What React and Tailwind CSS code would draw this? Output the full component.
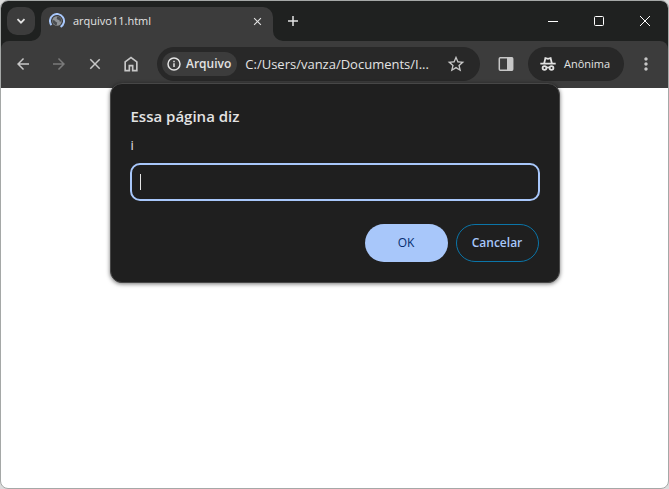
import React from "react";
import { MdArrowBack, MdArrowForward, MdClose, MdStarBorder, MdMoreVert } from "react-icons/md";

function LoadingFavicon() {
  return (
    <svg className="h-4 w-4 shrink-0" viewBox="0 0 16 16" fill="none" aria-hidden="true">
      <path d="M2.4 12.2A7 7 0 1 1 11.6 14" stroke="#a8c7fa" strokeWidth="2" />
      <circle cx="8" cy="8" r="4.8" fill="#8f9397" />
      <path d="M3.6 7 5.6 7.4 7 9 8.2 9.6 7.6 12.4A4.6 4.6 0 0 1 3.6 7ZM8.4 3.6 7.6 5.4 8.8 6.8 10.4 7 10.6 8.4 12.4 8.4A4.6 4.6 0 0 0 8.4 3.6Z" fill="#4a4d51" />
    </svg>
  );
}

function HomeIcon() {
  return (
    <svg className="h-5 w-5" viewBox="0 -960 960 960" fill="currentColor" aria-hidden="true">
      <path d="M240-200h120v-240h240v240h120v-360L480-740 240-560v360Zm-80 80v-480l320-240 320 240v480H520v-240h-80v240H160Z" />
    </svg>
  );
}

function InfoIcon() {
  return (
    <svg className="h-4 w-4" viewBox="0 0 16 16" fill="none" stroke="currentColor" aria-hidden="true">
      <circle cx="8" cy="8" r="6" strokeWidth="1.5" />
      <path d="M8 7.2V11M8 4.7V6.2" strokeWidth="1.5" />
    </svg>
  );
}

function SidePanelIcon() {
  return (
    <svg className="h-4 w-4" viewBox="0 0 16 16" fill="none" aria-hidden="true">
      <rect x="1.3" y="1.7" width="13.4" height="12.6" rx="1" stroke="currentColor" strokeWidth="1.5" />
      <path d="M9 1.5H14.5V14.5H9Z" fill="currentColor" />
    </svg>
  );
}

function IncognitoIcon() {
  return (
    <svg className="h-4 w-4" viewBox="0 0 16 16" fill="none" stroke="currentColor" strokeWidth="1.8" aria-hidden="true">
      <path d="M.3 7.6H15.7" />
      <path d="M4.2 7.2 5.4 2.1 8 2.8 10.6 2.1 11.8 7.2" />
      <circle cx="4.5" cy="12" r="1.9" />
      <circle cx="11.5" cy="12" r="1.9" />
      <path d="M6.3 11.8Q8 11 9.7 11.8" />
    </svg>
  );
}

function WindowButton({ label, children }) {
  return (
    <button type="button" aria-label={label} className="flex h-10 w-[46px] items-center justify-center text-white">
      <svg className="h-3 w-3" viewBox="0 0 12 12" fill="none" stroke="currentColor" aria-hidden="true">
        {children}
      </svg>
    </button>
  );
}

function TabStrip() {
  return (
    <div className="flex h-10 bg-[#1f2120]">
      <button type="button" aria-label="Pesquisar guias" className="mt-[6px] ml-[6px] flex h-7 w-7 items-center justify-center rounded-[10px] bg-[#3c3c3c] text-[#e3e3e3]">
        <svg className="h-3 w-3" viewBox="0 0 12 12" fill="none" stroke="currentColor" strokeWidth="1.8" aria-hidden="true">
          <path d="M2.5 4.2 6 7.7 9.5 4.2" />
        </svg>
      </button>
      <div className="flex flex-1 items-end">
        <svg className="-ml-1 h-[10px] w-[10px] shrink-0" viewBox="0 0 10 10" aria-hidden="true">
          <path d="M10 0A10 10 0 0 1 0 10H10Z" fill="#3c3c3c" />
        </svg>
        <div className="flex h-[34px] w-[232px] items-center rounded-t-[10px] bg-[#3c3c3c] pr-2 pb-[6px] pl-2">
          <LoadingFavicon />
          <span className="ml-2 flex-1 text-[11px] leading-4 text-[#e3e3e3]">arquivo11.html</span>
          <button type="button" aria-label="Fechar guia" className="flex h-4 w-4 items-center justify-center text-[#e3e3e3]">
            <MdClose size={13} />
          </button>
        </div>
        <svg className="h-[10px] w-[10px] shrink-0" viewBox="0 0 10 10" aria-hidden="true">
          <path d="M0 0A10 10 0 0 0 10 10H0Z" fill="#3c3c3c" />
        </svg>
        <button type="button" aria-label="Nova guia" className="mb-[6px] flex h-7 w-5 items-center justify-center text-[#e3e3e3]">
          <svg className="h-[10px] w-[10px]" viewBox="0 0 10 10" stroke="currentColor" strokeWidth="1.5" aria-hidden="true">
            <path d="M5 0V10M0 5H10" />
          </svg>
        </button>
      </div>
      <WindowButton label="Minimizar"><path d="M1 6.5H11" /></WindowButton>
      <WindowButton label="Maximizar"><rect x="1.5" y="1.5" width="9" height="9" rx="1" /></WindowButton>
      <WindowButton label="Fechar"><path d="M1 1 11 11M11 1 1 11" /></WindowButton>
    </div>
  );
}

function ToolButton({ label, dim, children }) {
  return (
    <button type="button" aria-label={label} className={`flex h-[34px] w-9 shrink-0 items-center justify-center ${dim ? "text-[#7a7a7a]" : "text-[#c7c7c7]"}`}>
      {children}
    </button>
  );
}

function Toolbar() {
  return (
    <div className="bg-[#1f2120]">
      <div className="flex h-[47px] items-start rounded-t-lg bg-[#3c3c3c] pt-[6px] pr-1 pl-1">
        <ToolButton label="Voltar"><MdArrowBack size={18} /></ToolButton>
        <ToolButton label="Avançar" dim><MdArrowForward size={18} /></ToolButton>
        <ToolButton label="Parar"><MdClose size={18} /></ToolButton>
        <ToolButton label="Início"><HomeIcon /></ToolButton>
        <div className="ml-2 flex h-[34px] min-w-0 flex-1 items-center rounded-full bg-[#282828] pl-[5px]">
          <button type="button" className="flex h-6 items-center rounded-full bg-[#3c3c3c] pr-1.5 pl-1 text-[12px] font-semibold text-[#e3e3e3]">
            <InfoIcon />
            <span className="ml-1 leading-4">Arquivo</span>
          </button>
          <input
            aria-label="Barra de endereço"
            readOnly
            defaultValue="C:/Users/vanza/Documents/I..."
            className="ml-2 h-6 min-w-0 flex-1 bg-transparent text-[13px] text-[#e3e3e3] outline-none"
          />
          <button type="button" aria-label="Adicionar aos favoritos" className="mr-[14px] ml-2 text-[#c7c7c7]">
            <MdStarBorder size={20} />
          </button>
        </div>
        <div className="ml-2">
          <ToolButton label="Painel lateral"><SidePanelIcon /></ToolButton>
        </div>
        <button type="button" className="mr-1 ml-1 flex h-[34px] w-24 shrink-0 items-center rounded-full bg-[#282828] pl-3 text-[11px] text-[#e3e3e3]">
          <IncognitoIcon />
          <span className="ml-2">Anônima</span>
        </button>
        <ToolButton label="Menu"><MdMoreVert size={20} /></ToolButton>
      </div>
    </div>
  );
}

function PromptDialog() {
  return (
    <form
      role="dialog"
      aria-labelledby="prompt-title"
      onSubmit={(event) => event.preventDefault()}
      className="absolute inset-x-0 top-[82px] mx-auto w-[450px] max-w-full rounded-xl border border-[#474747] bg-[#1f1f1f] px-5 pt-[21px] pb-5 shadow-[0_1px_4px_rgba(0,0,0,0.55)]"
    >
      <h1 id="prompt-title" className="text-[15px] leading-[22px] font-semibold text-[#e3e3e3]">Essa página diz</h1>
      <label htmlFor="prompt-value" className="mt-2 block text-[13px] leading-5 text-[#e3e3e3]">i</label>
      <div className="mt-2 -mr-px -ml-px flex h-[38px] items-center rounded-[10px] border-2 border-[#a8c7fa] px-2">
        <span aria-hidden="true" className="h-4 w-px bg-[#e3e3e3]" />
        <input id="prompt-value" type="text" className="h-full min-w-0 flex-1 bg-transparent text-[13px] text-[#e3e3e3] caret-transparent outline-none" />
      </div>
      <div className="mt-[23px] flex justify-end gap-2 text-[12px]">
        <button type="submit" className="h-[38px] w-[83px] rounded-full bg-[#a8c7fa] font-medium text-[#062e6f]">OK</button>
        <button type="button" className="h-[38px] w-[83px] rounded-full border border-[#0b75a8] font-semibold text-[#a8c7fa]">Cancelar</button>
      </div>
    </form>
  );
}

export default function App() {
  return (
    <div className="flex min-h-screen bg-[#dcdcdc] font-['Open_Sans','Noto_Sans',sans-serif]">
      <div className="relative flex-1 overflow-hidden rounded-lg border border-[#a5a8a7] bg-white">
        <TabStrip />
        <Toolbar />
        <PromptDialog />
      </div>
    </div>
  );
}
